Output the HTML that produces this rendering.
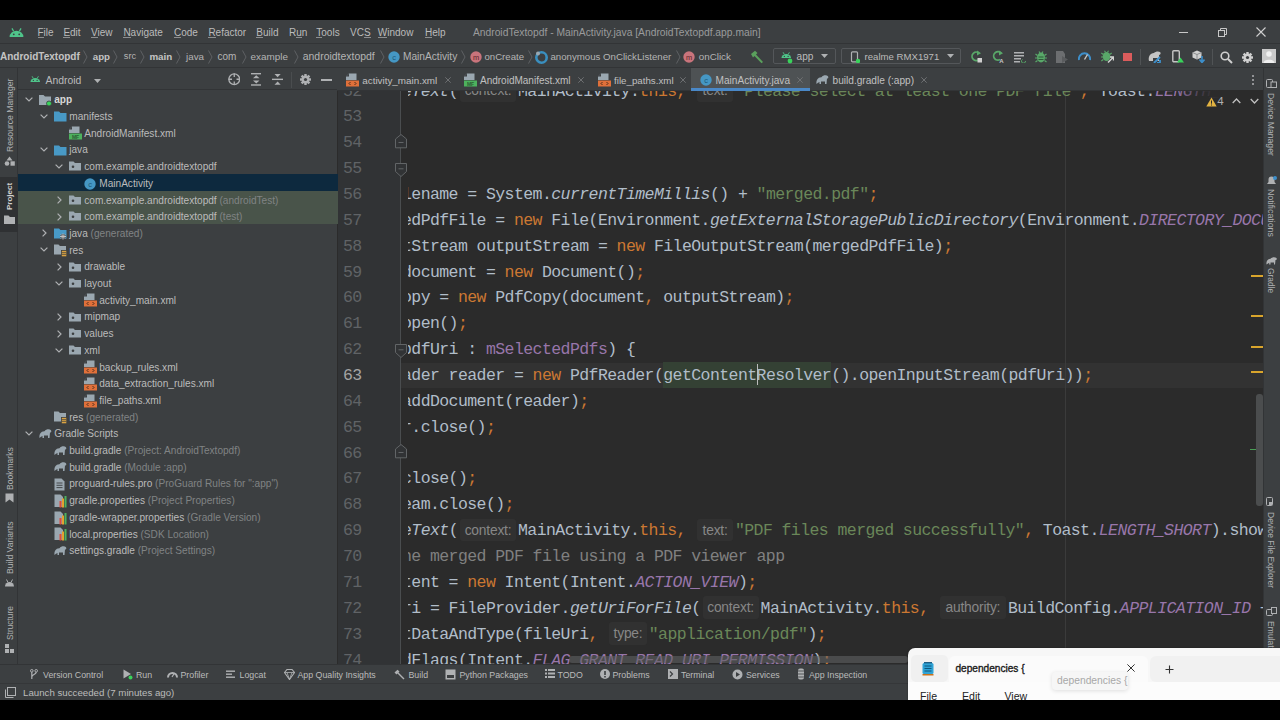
<!DOCTYPE html>
<html><head><meta charset="utf-8">
<style>
*{margin:0;padding:0;box-sizing:border-box}
html,body{width:1280px;height:720px;overflow:hidden;background:#000}
body{position:relative;font-family:"Liberation Sans",sans-serif;color:#bbbbbb}
.a{position:absolute}
.t{position:absolute;white-space:nowrap;line-height:1}
#menubar{left:0;top:20px;width:1280px;height:24px;background:#3c3f41;border-bottom:1px solid #323436}
#navbar{left:0;top:44px;width:1280px;height:24px;background:#3c3f41;border-bottom:1px solid #323436}
#lstrip{left:0;top:68px;width:18px;height:596px;background:#3c3f41;border-right:1px solid #323436}
#rstrip{left:1263px;top:68px;width:17px;height:596px;background:#3c3f41;border-left:1px solid #323436}
#proj{left:18px;top:68px;width:319px;height:596px;background:#3c3f41}
#projhead{left:18px;top:68px;width:319px;height:22px;border-bottom:1px solid #323436}
#editor{left:337px;top:68px;width:926px;height:596px;background:#2b2b2b;border-left:1px solid #2b2b2b}
#tabs{left:337px;top:68px;width:926px;height:22.6px;background:#3c3f41;border-bottom:1px solid #323436}
#gutter{left:338px;top:90px;width:63px;height:574px;background:#313335;overflow:hidden;border-right:1px solid #4a4d4f}
#codewrap{left:407.5px;top:90px;width:855.5px;height:574px;overflow:hidden}
#curline{left:401px;top:362.6px;width:862px;height:25.9px;background:#323232}
#btool{left:0;top:664px;width:1280px;height:19px;background:#3c3f41;border-top:1px solid #323436}
#status{left:0;top:683px;width:1280px;height:17px;background:#3c3f41;border-top:1px solid #353739}
.code{position:absolute;left:-5.54px;height:26px;font-family:"Liberation Mono",monospace;font-size:16.5px;letter-spacing:-0.5715px;line-height:25.865px;padding-top:0.4px;color:#b1bdc9;white-space:pre}
.ln{position:absolute;left:5px;font-family:"Liberation Mono",monospace;font-size:16.5px;letter-spacing:-0.5715px;line-height:25.865px;padding-top:0.4px;color:#606366;white-space:pre}
.ln.cur{color:#a4a3a3}
.k{color:#cc7832}.s{color:#6a8759}.i{font-style:italic}.p{color:#9876aa}.c{color:#808080}
.hl{background:#344134;display:inline-block;height:25.3px;margin-top:-0.8px;vertical-align:top;padding-top:0.8px}
.caret{display:inline-block;width:1px;height:20.7px;background:#bbbbbb;vertical-align:top;margin-top:1.3px;margin-right:-1px}
.ih{display:inline-block;vertical-align:top;margin:0.6px 2px 0 2px;height:22.5px;line-height:24.2px;background:#313131;color:#878787;border-radius:3px;font-family:"Liberation Sans",sans-serif;font-size:13.8px;text-align:center;letter-spacing:-0.2px}
</style></head><body>
<div id="menubar" class="a"></div>
<div id="navbar" class="a"></div>
<div id="lstrip" class="a"></div>
<div id="proj" class="a"></div>
<div id="projhead" class="a"></div>
<div id="editor" class="a"></div>
<div id="curline" class="a"></div>
<div class="a" style="left:1065px;top:90px;width:1px;height:574px;background:#3b3b3b"></div>
<div id="gutter" class="a">
<div class="ln" style="top:-11.89px">52</div>
<div class="ln" style="top:13.97px">53</div>
<div class="ln" style="top:39.84px">54</div>
<div class="ln" style="top:65.70px">55</div>
<div class="ln" style="top:91.56px">56</div>
<div class="ln" style="top:117.43px">57</div>
<div class="ln" style="top:143.29px">58</div>
<div class="ln" style="top:169.16px">59</div>
<div class="ln" style="top:195.02px">60</div>
<div class="ln" style="top:220.89px">61</div>
<div class="ln" style="top:246.75px">62</div>
<div class="ln cur" style="top:272.62px">63</div>
<div class="ln" style="top:298.49px">64</div>
<div class="ln" style="top:324.35px">65</div>
<div class="ln" style="top:350.22px">66</div>
<div class="ln" style="top:376.08px">67</div>
<div class="ln" style="top:401.94px">68</div>
<div class="ln" style="top:427.81px">69</div>
<div class="ln" style="top:453.67px">70</div>
<div class="ln" style="top:479.54px">71</div>
<div class="ln" style="top:505.40px">72</div>
<div class="ln" style="top:531.27px">73</div>
<div class="ln" style="top:557.13px">74</div>
</div>
<div id="codewrap" class="a">
<div class="code" style="top:-11.89px">e<span class="i">Text</span>(<span class="ih" style="width:56px">context:</span>MainActivity.<span class="k">this</span><span class="k">,</span> <span class="ih" style="width:35.6px">text:</span><span class="s">"Please select at least one PDF file"</span><span class="k">,</span> Toast.<span class="p i">LENGTH_SHORT</span>).show()<span class="k">;</span></div>
<div class="code" style="top:91.56px">lename = System.<span class="i">currentTimeMillis</span>() + <span class="s">"merged.pdf"</span><span class="k">;</span></div>
<div class="code" style="top:117.43px">edPdfFile = <span class="k">new</span> File(Environment.<span class="i">getExternalStoragePublicDirectory</span>(Environment.<span class="p i">DIRECTORY_DOCUMENTS</span>)<span class="k">,</span></div>
<div class="code" style="top:143.29px">tStream outputStream = <span class="k">new</span> FileOutputStream(mergedPdfFile)<span class="k">;</span></div>
<div class="code" style="top:169.16px">document = <span class="k">new</span> Document()<span class="k">;</span></div>
<div class="code" style="top:195.02px">opy = <span class="k">new</span> PdfCopy(document<span class="k">,</span> outputStream)<span class="k">;</span></div>
<div class="code" style="top:220.89px">open()<span class="k">;</span></div>
<div class="code" style="top:246.75px">pdfUri : <span class="p">mSelectedPdfs</span>) {</div>
<div class="code" style="top:272.62px">ader reader = <span class="k">new</span> PdfReader(<span class="hl">getContent<span class="caret"></span>Resolver</span>().openInputStream(pdfUri))<span class="k">;</span></div>
<div class="code" style="top:298.49px">addDocument(reader)<span class="k">;</span></div>
<div class="code" style="top:324.35px">r.close()<span class="k">;</span></div>
<div class="code" style="top:376.08px">close()<span class="k">;</span></div>
<div class="code" style="top:401.94px">eam.close()<span class="k">;</span></div>
<div class="code" style="top:427.81px">e<span class="i">Text</span>(<span class="ih" style="width:56px">context:</span>MainActivity.<span class="k">this</span><span class="k">,</span> <span class="ih" style="width:35.6px">text:</span><span class="s">"PDF files merged successfully"</span><span class="k">,</span> Toast.<span class="p i">LENGTH_SHORT</span>).show()<span class="k">;</span></div>
<div class="code" style="top:453.67px"><span class="c">he merged PDF file using a PDF viewer app</span></div>
<div class="code" style="top:479.54px">tent = <span class="k">new</span> Intent(Intent.<span class="p i">ACTION_VIEW</span>)<span class="k">;</span></div>
<div class="code" style="top:505.40px">ri = FileProvider.<span class="i">getUriForFile</span>(<span class="ih" style="width:56px">context:</span>MainActivity.<span class="k">this</span><span class="k">,</span> <span class="ih" style="width:66px">authority:</span>BuildConfig.<span class="p i">APPLICATION_ID</span> + <span class="s">".provider"</span>)<span class="k">;</span></div>
<div class="code" style="top:531.27px">tDataAndType(fileUri<span class="k">,</span> <span class="ih" style="width:37.5px">type:</span><span class="s">"application/pdf"</span>)<span class="k">;</span></div>
<div class="code" style="top:557.13px">dFlags(Intent.<span class="p i">FLAG_GRANT_READ_URI_PERMISSION</span>)<span class="k">;</span></div>
</div>
<div id="tabs" class="a"></div>
<div id="rstrip" class="a"></div>
<div id="btool" class="a"></div>
<div id="status" class="a"></div>
<svg class="a" style="left:9.4px;top:27.8px" width="15.0" height="9.0" viewBox="0 0 15 9"><path d="M0.6 9 A6.9 6.3 0 0 1 14.4 9 Z" fill="#4fc48a"/><line x1="3" y1="0.4" x2="4.6" y2="3.2" stroke="#4fc48a" stroke-width="1.3"/><line x1="12" y1="0.4" x2="10.4" y2="3.2" stroke="#4fc48a" stroke-width="1.3"/><circle cx="4.8" cy="6.3" r="0.9" fill="#3c3f41"/><circle cx="10.2" cy="6.3" r="0.9" fill="#3c3f41"/></svg>
<div class="t" style="left:37.5px;top:27.8px;font-size:10.0px;color:#bbbbbb;">File</div>
<div class="t" style="left:63.4px;top:27.8px;font-size:10.0px;color:#bbbbbb;">Edit</div>
<div class="t" style="left:91px;top:27.8px;font-size:10.0px;color:#bbbbbb;">View</div>
<div class="t" style="left:123.4px;top:27.8px;font-size:10.0px;color:#bbbbbb;">Navigate</div>
<div class="t" style="left:174px;top:27.8px;font-size:10.0px;color:#bbbbbb;">Code</div>
<div class="t" style="left:208.4px;top:27.8px;font-size:10.0px;color:#bbbbbb;">Refactor</div>
<div class="t" style="left:256.3px;top:27.8px;font-size:10.0px;color:#bbbbbb;">Build</div>
<div class="t" style="left:289px;top:27.8px;font-size:10.0px;color:#bbbbbb;">Run</div>
<div class="t" style="left:316.3px;top:27.8px;font-size:10.0px;color:#bbbbbb;">Tools</div>
<div class="t" style="left:350px;top:27.8px;font-size:10.0px;color:#bbbbbb;">VCS</div>
<div class="t" style="left:377.8px;top:27.8px;font-size:10.0px;color:#bbbbbb;">Window</div>
<div class="t" style="left:425px;top:27.8px;font-size:10.0px;color:#bbbbbb;">Help</div>
<div class="a" style="left:37.5px;top:37.3px;width:6.1px;height:1px;background:#8c8e90;"></div>
<div class="a" style="left:63.4px;top:37.3px;width:6.7px;height:1px;background:#8c8e90;"></div>
<div class="a" style="left:91.0px;top:37.3px;width:6.7px;height:1px;background:#8c8e90;"></div>
<div class="a" style="left:123.4px;top:37.3px;width:7.2px;height:1px;background:#8c8e90;"></div>
<div class="a" style="left:174.0px;top:37.3px;width:7.2px;height:1px;background:#8c8e90;"></div>
<div class="a" style="left:208.4px;top:37.3px;width:7.2px;height:1px;background:#8c8e90;"></div>
<div class="a" style="left:256.3px;top:37.3px;width:6.7px;height:1px;background:#8c8e90;"></div>
<div class="a" style="left:296.2px;top:37.3px;width:5.6px;height:1px;background:#8c8e90;"></div>
<div class="a" style="left:316.3px;top:37.3px;width:6.1px;height:1px;background:#8c8e90;"></div>
<div class="a" style="left:363.9px;top:37.3px;width:6.7px;height:1px;background:#8c8e90;"></div>
<div class="a" style="left:377.8px;top:37.3px;width:9.4px;height:1px;background:#8c8e90;"></div>
<div class="a" style="left:425.0px;top:37.3px;width:7.2px;height:1px;background:#8c8e90;"></div>
<div class="t" style="left:472.9px;top:27.8px;font-size:10.3px;color:#9a9b9c;">AndroidTextopdf - MainActivity.java [AndroidTextopdf.app.main]</div>
<div class="a" style="left:1179px;top:32px;width:9px;height:1px;background:#c8c8c8;"></div>
<svg class="a" style="left:1217px;top:27px" width="11" height="11" viewBox="0 0 11 11"><rect x="1.5" y="3.5" width="6" height="6" fill="none" stroke="#c8c8c8"/><path d="M3.5 3.5V1.5H9.5V7.5H7.5" fill="none" stroke="#c8c8c8"/></svg>
<svg class="a" style="left:1256px;top:27px" width="10" height="10" viewBox="0 0 10 10"><path d="M0.5 0.5L9.5 9.5M9.5 0.5L0.5 9.5" stroke="#d0d0d0" stroke-width="1.1"/></svg>
<div class="t" style="left:0px;top:51.8px;font-size:10.0px;color:#c4c4c4;font-weight:bold;">AndroidTextopdf</div>
<div class="t" style="left:92.8px;top:51.8px;font-size:9.7px;color:#c4c4c4;font-weight:bold;">app</div>
<div class="t" style="left:123.8px;top:51.8px;font-size:9.2px;color:#b4b4b4;">src</div>
<div class="t" style="left:149.4px;top:51.8px;font-size:9.8px;color:#c4c4c4;font-weight:bold;">main</div>
<div class="t" style="left:186px;top:51.8px;font-size:9.8px;color:#b4b4b4;">java</div>
<div class="t" style="left:217.5px;top:51.8px;font-size:10.0px;color:#b4b4b4;">com</div>
<div class="t" style="left:250.6px;top:51.8px;font-size:9.9px;color:#b4b4b4;">example</div>
<div class="t" style="left:302.75px;top:51.8px;font-size:10.45px;color:#b4b4b4;">androidtextopdf</div>
<div class="t" style="left:402.9px;top:51.8px;font-size:10.2px;color:#b4b4b4;">MainActivity</div>
<div class="t" style="left:484.5px;top:51.8px;font-size:9.6px;color:#b4b4b4;">onCreate</div>
<div class="t" style="left:550.5px;top:51.8px;font-size:9.66px;color:#b4b4b4;">anonymous OnClickListener</div>
<div class="t" style="left:698.75px;top:51.8px;font-size:9.8px;color:#b4b4b4;">onClick</div>
<svg class="a" style="left:82.5px;top:50px" width="5" height="14" viewBox="0 0 5 14"><path d="M0.5 0.5L4 7L0.5 13.5" fill="none" stroke="#5e6163" stroke-width="1"/></svg>
<svg class="a" style="left:113.4px;top:50px" width="5" height="14" viewBox="0 0 5 14"><path d="M0.5 0.5L4 7L0.5 13.5" fill="none" stroke="#5e6163" stroke-width="1"/></svg>
<svg class="a" style="left:139.7px;top:50px" width="5" height="14" viewBox="0 0 5 14"><path d="M0.5 0.5L4 7L0.5 13.5" fill="none" stroke="#5e6163" stroke-width="1"/></svg>
<svg class="a" style="left:176px;top:50px" width="5" height="14" viewBox="0 0 5 14"><path d="M0.5 0.5L4 7L0.5 13.5" fill="none" stroke="#5e6163" stroke-width="1"/></svg>
<svg class="a" style="left:208px;top:50px" width="5" height="14" viewBox="0 0 5 14"><path d="M0.5 0.5L4 7L0.5 13.5" fill="none" stroke="#5e6163" stroke-width="1"/></svg>
<svg class="a" style="left:242px;top:50px" width="5" height="14" viewBox="0 0 5 14"><path d="M0.5 0.5L4 7L0.5 13.5" fill="none" stroke="#5e6163" stroke-width="1"/></svg>
<svg class="a" style="left:293.8px;top:50px" width="5" height="14" viewBox="0 0 5 14"><path d="M0.5 0.5L4 7L0.5 13.5" fill="none" stroke="#5e6163" stroke-width="1"/></svg>
<svg class="a" style="left:380px;top:50px" width="5" height="14" viewBox="0 0 5 14"><path d="M0.5 0.5L4 7L0.5 13.5" fill="none" stroke="#5e6163" stroke-width="1"/></svg>
<svg class="a" style="left:461px;top:50px" width="5" height="14" viewBox="0 0 5 14"><path d="M0.5 0.5L4 7L0.5 13.5" fill="none" stroke="#5e6163" stroke-width="1"/></svg>
<svg class="a" style="left:528px;top:50px" width="5" height="14" viewBox="0 0 5 14"><path d="M0.5 0.5L4 7L0.5 13.5" fill="none" stroke="#5e6163" stroke-width="1"/></svg>
<svg class="a" style="left:675.5px;top:50px" width="5" height="14" viewBox="0 0 5 14"><path d="M0.5 0.5L4 7L0.5 13.5" fill="none" stroke="#5e6163" stroke-width="1"/></svg>
<svg class="a" style="left:387.5px;top:51px" width="12" height="12" viewBox="0 0 12 12"><circle cx="6.0" cy="6.0" r="5.7" fill="#4597c4"/><text x="6.0" y="8.6" text-anchor="middle" font-family="Liberation Sans" font-size="7.4399999999999995" fill="#1d5878">c</text></svg>
<svg class="a" style="left:469.5px;top:51px" width="12" height="12" viewBox="0 0 12 12"><circle cx="6.0" cy="6.0" r="5.7" fill="#c9747c"/><text x="6.0" y="8.6" text-anchor="middle" font-family="Liberation Sans" font-size="7.4399999999999995" fill="#5c2226">m</text></svg>
<svg class="a" style="left:535px;top:50.5px" width="13" height="13" viewBox="0 0 13 13"><circle cx="6.5" cy="6.5" r="5.2" fill="none" stroke="#3a8fbf" stroke-width="2.6"/><circle cx="3" cy="2.5" r="2" fill="#9aa7b0"/></svg>
<svg class="a" style="left:683.25px;top:51px" width="12" height="12" viewBox="0 0 12 12"><circle cx="6.0" cy="6.0" r="5.7" fill="#c9747c"/><text x="6.0" y="8.6" text-anchor="middle" font-family="Liberation Sans" font-size="7.4399999999999995" fill="#5c2226">m</text></svg>
<svg class="a" style="left:750px;top:50px" width="14" height="14" viewBox="0 0 14 14"><path d="M1 4L5 0.8L7.5 3L6 4.5L13 12L11.5 13.3L4.5 6L3 7.5Z" fill="#5aa05c"/></svg>
<div class="a" style="left:772.6px;top:47.7px;width:63px;height:16.3px;background:#3c3f41;border:1px solid #54575a;border-radius:2px;"></div>
<svg class="a" style="left:781.3px;top:52px" width="10.5" height="6.3" viewBox="0 0 15 9"><path d="M0.6 9 A6.9 6.3 0 0 1 14.4 9 Z" fill="#4fc48a"/><line x1="3" y1="0.4" x2="4.6" y2="3.2" stroke="#4fc48a" stroke-width="1.3"/><line x1="12" y1="0.4" x2="10.4" y2="3.2" stroke="#4fc48a" stroke-width="1.3"/><circle cx="4.8" cy="6.3" r="0.9" fill="#3c3f41"/><circle cx="10.2" cy="6.3" r="0.9" fill="#3c3f41"/></svg>
<svg class="a" style="left:787px;top:58px" width="6" height="6" viewBox="0 0 6 6"><circle cx="3" cy="3" r="2.4" fill="#39d35b"/></svg>
<div class="t" style="left:796.6px;top:51.8px;font-size:10.1px;color:#bbbbbb;">app</div>
<svg class="a" style="left:820.5px;top:54px" width="7" height="4" viewBox="0 0 7 4"><path d="M0 0H7L3.5 4Z" fill="#afb1b3"/></svg>
<div class="a" style="left:840.8px;top:47.7px;width:120px;height:16.3px;background:#3c3f41;border:1px solid #54575a;border-radius:2px;"></div>
<svg class="a" style="left:850px;top:50.5px" width="10" height="12" viewBox="0 0 10 12"><rect x="1.5" y="0.8" width="6" height="10" rx="1" fill="none" stroke="#afb1b3" stroke-width="1.2"/><circle cx="8" cy="10" r="2.2" fill="#39d35b"/></svg>
<div class="t" style="left:864.6px;top:51.8px;font-size:9.6px;color:#bbbbbb;">realme RMX1971</div>
<svg class="a" style="left:946.5px;top:54px" width="7" height="4" viewBox="0 0 7 4"><path d="M0 0H7L3.5 4Z" fill="#afb1b3"/></svg>
<svg class="a" style="left:970px;top:50px" width="12" height="13" viewBox="0 0 12 13"><path d="M9 9.5A4.2 4.2 0 1 1 9.2 3.3" fill="none" stroke="#59a869" stroke-width="1.8"/><path d="M7 0.5L11 3.3L7 5.5Z" fill="#59a869"/><rect x="7.5" y="8" width="4.5" height="4.5" fill="#d0d0d0"/></svg>
<svg class="a" style="left:991.5px;top:50px" width="12" height="13" viewBox="0 0 12 13"><path d="M8 9.5A4.2 4.2 0 1 1 9.2 3.3" fill="none" stroke="#59a869" stroke-width="1.8"/><path d="M7 0.5L11 3.3L7 5.5Z" fill="#59a869"/><text x="9.5" y="12.8" font-size="6" font-family="Liberation Sans" font-weight="bold" fill="#c8c8c8" text-anchor="middle">A</text></svg>
<svg class="a" style="left:1014px;top:50.5px" width="12" height="12" viewBox="0 0 12 12"><rect x="0" y="1" width="10" height="1.5" fill="#afb1b3"/><rect x="0" y="4" width="10" height="1.5" fill="#afb1b3"/><rect x="0" y="7" width="7" height="1.5" fill="#afb1b3"/><rect x="0" y="10" width="6" height="1.5" fill="#afb1b3"/><path d="M8.5 8.5a2 2 0 1 0 3 1.5" fill="none" stroke="#59a869" stroke-width="1"/></svg>
<svg class="a" style="left:1035px;top:50px" width="12" height="13" viewBox="0 0 12 13"><ellipse cx="6" cy="7.5" rx="4" ry="5" fill="#59a869"/><path d="M0.5 4L2.5 5.5M11.5 4L9.5 5.5M0 8H2M10 8H12M0.5 12L2.5 10.5M11.5 12L9.5 10.5M4 1.5L5 3M8 1.5L7 3" stroke="#59a869" stroke-width="1.2"/><rect x="3.5" y="6.5" width="5" height="1" fill="#2d5a38"/><rect x="3.5" y="9" width="5" height="1" fill="#2d5a38"/></svg>
<svg class="a" style="left:1056.4px;top:50.5px" width="13" height="12" viewBox="0 0 13 12"><path d="M0 0H7L9 3V12H0Z" fill="#6c6e70"/><path d="M6 5L12 8.5L6 12Z" fill="#5a5c5e"/></svg>
<svg class="a" style="left:1077.7px;top:51px" width="13" height="10" viewBox="0 0 13 10"><path d="M1 9A5.6 5.6 0 1 1 12 9" fill="none" stroke="#3d8fcb" stroke-width="2"/><path d="M6.5 8.5L9.5 3.5" stroke="#c8c8c8" stroke-width="1.4"/></svg>
<svg class="a" style="left:1100.6px;top:50px" width="13" height="13" viewBox="0 0 13 13"><ellipse cx="5.5" cy="6.5" rx="3.8" ry="4.6" fill="#59a869"/><path d="M0.3 3L2.3 4.5M10.7 3L8.7 4.5M0 7H2M9 7H11M0.3 11L2.3 9.5M3.5 0.8L4.5 2.3M7.5 0.8L6.5 2.3" stroke="#59a869" stroke-width="1.1"/><path d="M7 12.5L12.5 7M9 7H12.5V10.5" fill="none" stroke="#d0d0d0" stroke-width="1.5"/></svg>
<div class="a" style="left:1123px;top:52.5px;width:8.7px;height:8.1px;background:#db5c5c;"></div>
<div class="a" style="left:1140px;top:49px;width:1px;height:16px;background:#505355;"></div>
<svg class="a" style="left:1148.3px;top:50px" width="14" height="13" viewBox="0 0 14 13"><path d="M1 11C0 7 2 3 6 3C8 1 11 1 12.5 2.5C13 4 12 5 11 5L11 11H9.5V8H5V11H3.5Z" fill="#c5c5c5"/><path d="M6 13L12 7M9 13H12V10" fill="none" stroke="#3d8fcb" stroke-width="1.8"/></svg>
<svg class="a" style="left:1171.7px;top:50px" width="12" height="13" viewBox="0 0 12 13"><rect x="0.8" y="0.8" width="6.5" height="11" rx="1" fill="none" stroke="#c5c5c5" stroke-width="1.4"/><path d="M5 12.5L8.5 7.5L12 12.5Z" fill="#39d35b"/></svg>
<svg class="a" style="left:1192px;top:50px" width="13" height="13" viewBox="0 0 13 13"><path d="M5 0.5L9.5 2.5V7.5L5 9.5L0.5 7.5V2.5Z" fill="#d0d0d0"/><path d="M0.5 2.5L5 4.5L9.5 2.5M5 4.5V9.5" stroke="#7a7c7e" stroke-width="0.8" fill="none"/><path d="M10 6V12M7.5 9.5L10 12.5L12.5 9.5" fill="none" stroke="#3d8fcb" stroke-width="1.6"/></svg>
<div class="a" style="left:1211.8px;top:49px;width:1px;height:16px;background:#505355;"></div>
<svg class="a" style="left:1219.9px;top:50.5px" width="13" height="13" viewBox="0 0 13 13"><circle cx="5" cy="5" r="3.8" fill="none" stroke="#d0d0d0" stroke-width="1.6"/><path d="M8 8L12 12" stroke="#d0d0d0" stroke-width="1.9"/></svg>
<svg class="a" style="left:1241.7px;top:51.5px" width="11" height="11" viewBox="0 0 11 11"><g transform="translate(5.5 5.5)"><circle r="3.9" fill="#d0d0d0"/><rect x="-1.2" y="-5.5" width="2.4" height="2.5" fill="#d0d0d0" transform="rotate(0)"/><rect x="-1.2" y="-5.5" width="2.4" height="2.5" fill="#d0d0d0" transform="rotate(45)"/><rect x="-1.2" y="-5.5" width="2.4" height="2.5" fill="#d0d0d0" transform="rotate(90)"/><rect x="-1.2" y="-5.5" width="2.4" height="2.5" fill="#d0d0d0" transform="rotate(135)"/><rect x="-1.2" y="-5.5" width="2.4" height="2.5" fill="#d0d0d0" transform="rotate(180)"/><rect x="-1.2" y="-5.5" width="2.4" height="2.5" fill="#d0d0d0" transform="rotate(225)"/><rect x="-1.2" y="-5.5" width="2.4" height="2.5" fill="#d0d0d0" transform="rotate(270)"/><rect x="-1.2" y="-5.5" width="2.4" height="2.5" fill="#d0d0d0" transform="rotate(315)"/><circle r="1.6" fill="#3c3f41"/></g></svg>
<div class="a" style="left:1262px;top:49px;width:14px;height:14.2px;background:#c9c9c9;"></div>
<svg class="a" style="left:1262px;top:49px" width="14" height="14" viewBox="0 0 14 14"><circle cx="7" cy="5" r="2.8" fill="#f0f0f0"/><path d="M1.5 14C1.5 9.5 12.5 9.5 12.5 14Z" fill="#f0f0f0"/></svg>
<svg class="a" style="left:29.8px;top:76px" width="10.5" height="6.3" viewBox="0 0 15 9"><path d="M0.6 9 A6.9 6.3 0 0 1 14.4 9 Z" fill="#4fc48a"/><line x1="3" y1="0.4" x2="4.6" y2="3.2" stroke="#4fc48a" stroke-width="1.3"/><line x1="12" y1="0.4" x2="10.4" y2="3.2" stroke="#4fc48a" stroke-width="1.3"/><circle cx="4.8" cy="6.3" r="0.9" fill="#3c3f41"/><circle cx="10.2" cy="6.3" r="0.9" fill="#3c3f41"/></svg>
<div class="t" style="left:45.5px;top:76.2px;font-size:10.4px;color:#bbbbbb;">Android</div>
<svg class="a" style="left:94px;top:79px" width="7" height="4" viewBox="0 0 7 4"><path d="M0 0H7L3.5 4Z" fill="#afb1b3"/></svg>
<svg class="a" style="left:227.8px;top:73.3px" width="12.5" height="12.5" viewBox="0 0 12.5 12.5"><circle cx="6.25" cy="6.25" r="5.4" fill="none" stroke="#afb1b3" stroke-width="1.3"/><path d="M6.25 0.5V4M6.25 8.5V12M0.5 6.25H4M8.5 6.25H12" stroke="#afb1b3" stroke-width="1.3"/></svg>
<svg class="a" style="left:250.9px;top:73.3px" width="10.5" height="12.7" viewBox="0 0 10.5 12.7"><rect x="0" y="0" width="10.5" height="1.4" fill="#afb1b3"/><rect x="0" y="11.3" width="10.5" height="1.4" fill="#afb1b3"/><path d="M2 5.3L5.25 2.3L8.5 5.3ZM2 7.4L5.25 10.4L8.5 7.4Z" fill="#afb1b3"/></svg>
<svg class="a" style="left:271.7px;top:73.3px" width="11.2" height="12.7" viewBox="0 0 11.2 12.7"><rect x="0" y="5.65" width="11.2" height="1.4" fill="#afb1b3"/><path d="M2.5 1H8.7L5.6 4.3ZM2.5 11.7H8.7L5.6 8.4Z" fill="#afb1b3"/></svg>
<div class="a" style="left:291.4px;top:72px;width:1px;height:16px;background:#4a4d4f;"></div>
<svg class="a" style="left:300px;top:73.8px" width="11" height="11" viewBox="0 0 11 11"><g transform="translate(5.5 5.5)"><circle r="3.9" fill="#afb1b3"/><rect x="-1.2" y="-5.5" width="2.4" height="2.5" fill="#afb1b3" transform="rotate(0)"/><rect x="-1.2" y="-5.5" width="2.4" height="2.5" fill="#afb1b3" transform="rotate(45)"/><rect x="-1.2" y="-5.5" width="2.4" height="2.5" fill="#afb1b3" transform="rotate(90)"/><rect x="-1.2" y="-5.5" width="2.4" height="2.5" fill="#afb1b3" transform="rotate(135)"/><rect x="-1.2" y="-5.5" width="2.4" height="2.5" fill="#afb1b3" transform="rotate(180)"/><rect x="-1.2" y="-5.5" width="2.4" height="2.5" fill="#afb1b3" transform="rotate(225)"/><rect x="-1.2" y="-5.5" width="2.4" height="2.5" fill="#afb1b3" transform="rotate(270)"/><rect x="-1.2" y="-5.5" width="2.4" height="2.5" fill="#afb1b3" transform="rotate(315)"/><circle r="1.6" fill="#3c3f41"/></g></svg>
<div class="a" style="left:321.4px;top:79px;width:10.6px;height:1.6px;background:#afb1b3;"></div>
<div class="a" style="left:18px;top:174px;width:320px;height:16.7px;background:#0d293e;"></div>
<div class="a" style="left:18px;top:190.7px;width:320px;height:33.3px;background:#49544a;"></div>
<svg class="a" style="left:24.5px;top:97.0px" width="8" height="5" viewBox="0 0 8 5"><path d="M0.6 0.6L4 4L7.4 0.6" fill="none" stroke="#afb1b3" stroke-width="1.2"/></svg>
<svg class="a" style="left:39.25px;top:94.0px" width="13" height="12" viewBox="0 0 13 12"><path d="M0 1H4.5L6 2.5H12V11H0Z" fill="#9aa7b0"/><circle cx="10" cy="9.5" r="2.5" fill="#39d35b" stroke="#3c3f41" stroke-width="0.8"/></svg>
<div class="t" style="left:54.25px;top:95.3px;font-size:10.1px;color:#d8d8d8;font-weight:bold;">app</div>
<svg class="a" style="left:39.5px;top:113.7px" width="8" height="5" viewBox="0 0 8 5"><path d="M0.6 0.6L4 4L7.4 0.6" fill="none" stroke="#afb1b3" stroke-width="1.2"/></svg>
<svg class="a" style="left:54.25px;top:111.2px" width="12.5" height="11" viewBox="0 0 12.5 11"><path d="M0 0.5H5L6.5 2H12.5V10.5H0Z" fill="#4899c6"/></svg>
<div class="t" style="left:69.25px;top:112.0px;font-size:10.1px;color:#bbbbbb;">manifests</div>
<svg class="a" style="left:69.25px;top:126.4px" width="13" height="14" viewBox="0 0 13 14"><path d="M3 0.5H10.5V7H0V3.5Z" fill="#9aa7b0"/><path d="M0 3.5H3V0.5Z" fill="#3c3f41"/><rect x="0" y="7.5" width="13" height="6" fill="#4db25e"/><text x="6.5" y="12.6" font-size="5" text-anchor="middle" font-family="Liberation Sans" font-weight="bold" fill="#2b5e34">MF</text></svg>
<div class="t" style="left:84.25px;top:128.70000000000002px;font-size:10.1px;color:#bbbbbb;">AndroidManifest.xml</div>
<svg class="a" style="left:39.5px;top:147.1px" width="8" height="5" viewBox="0 0 8 5"><path d="M0.6 0.6L4 4L7.4 0.6" fill="none" stroke="#afb1b3" stroke-width="1.2"/></svg>
<svg class="a" style="left:54.25px;top:144.6px" width="12.5" height="11" viewBox="0 0 12.5 11"><path d="M0 0.5H5L6.5 2H12.5V10.5H0Z" fill="#4899c6"/></svg>
<div class="t" style="left:69.25px;top:145.4px;font-size:10.1px;color:#bbbbbb;">java</div>
<svg class="a" style="left:54.5px;top:163.8px" width="8" height="5" viewBox="0 0 8 5"><path d="M0.6 0.6L4 4L7.4 0.6" fill="none" stroke="#afb1b3" stroke-width="1.2"/></svg>
<svg class="a" style="left:69.25px;top:161.3px" width="12" height="10" viewBox="0 0 12 10"><path d="M0 0.5H4.5L6 2H12V9.5H0Z" fill="#9aa7b0"/><circle cx="4" cy="5.8" r="1.3" fill="#3c3f41"/></svg>
<div class="t" style="left:84.25px;top:162.10000000000002px;font-size:10.1px;color:#bbbbbb;">com.example.androidtextopdf</div>
<svg class="a" style="left:84.25px;top:177.5px" width="12" height="12" viewBox="0 0 12 12"><circle cx="6.0" cy="6.0" r="5.7" fill="#4597c4"/><text x="6.0" y="8.6" text-anchor="middle" font-family="Liberation Sans" font-size="7.4399999999999995" fill="#1d5878">c</text></svg>
<div class="t" style="left:99.25px;top:178.8px;font-size:10.1px;color:#bbbbbb;">MainActivity</div>
<svg class="a" style="left:56.5px;top:196.0px" width="5" height="8" viewBox="0 0 5 8"><path d="M0.6 0.6L4 4L0.6 7.4" fill="none" stroke="#afb1b3" stroke-width="1.2"/></svg>
<svg class="a" style="left:69.25px;top:194.7px" width="12" height="10" viewBox="0 0 12 10"><path d="M0 0.5H4.5L6 2H12V9.5H0Z" fill="#9aa7b0"/><circle cx="4" cy="5.8" r="1.3" fill="#3c3f41"/></svg>
<div class="t" style="left:84.25px;top:195.5px;font-size:10.1px;color:#bbbbbb;">com.example.androidtextopdf<span style="color:#808384"> (androidTest)</span></div>
<svg class="a" style="left:56.5px;top:212.7px" width="5" height="8" viewBox="0 0 5 8"><path d="M0.6 0.6L4 4L0.6 7.4" fill="none" stroke="#afb1b3" stroke-width="1.2"/></svg>
<svg class="a" style="left:69.25px;top:211.39999999999998px" width="12" height="10" viewBox="0 0 12 10"><path d="M0 0.5H4.5L6 2H12V9.5H0Z" fill="#9aa7b0"/><circle cx="4" cy="5.8" r="1.3" fill="#3c3f41"/></svg>
<div class="t" style="left:84.25px;top:212.2px;font-size:10.1px;color:#bbbbbb;">com.example.androidtextopdf<span style="color:#808384"> (test)</span></div>
<svg class="a" style="left:41.5px;top:229.4px" width="5" height="8" viewBox="0 0 5 8"><path d="M0.6 0.6L4 4L0.6 7.4" fill="none" stroke="#afb1b3" stroke-width="1.2"/></svg>
<svg class="a" style="left:54.25px;top:228.1px" width="13" height="12" viewBox="0 0 13 12"><path d="M0 0.5H5L6.5 2H12.5V10.5H0Z" fill="#4899c6"/><circle cx="9" cy="8.5" r="2.6" fill="#3c3f41"/><path d="M9 5.5V11.5M6 8.5H12M6.9 6.4L11.1 10.6M11.1 6.4L6.9 10.6" stroke="#c0c0c0" stroke-width="1"/></svg>
<div class="t" style="left:69.25px;top:228.9px;font-size:10.1px;color:#bbbbbb;">java<span style="color:#808384"> (generated)</span></div>
<svg class="a" style="left:39.5px;top:247.29999999999998px" width="8" height="5" viewBox="0 0 8 5"><path d="M0.6 0.6L4 4L7.4 0.6" fill="none" stroke="#afb1b3" stroke-width="1.2"/></svg>
<svg class="a" style="left:54.25px;top:244.29999999999998px" width="13" height="13" viewBox="0 0 13 13"><path d="M0 0.5H4.5L6 2H12V10.5H0Z" fill="#9aa7b0"/><rect x="7" y="6" width="5.5" height="6.5" fill="#3c3f41"/><rect x="7.8" y="6.8" width="4.5" height="5.5" fill="#d9a343"/><path d="M7.8 8.6H12.3M7.8 10.4H12.3" stroke="#3c3f41" stroke-width="0.7"/></svg>
<div class="t" style="left:69.25px;top:245.6px;font-size:10.1px;color:#bbbbbb;">res</div>
<svg class="a" style="left:56.5px;top:262.8px" width="5" height="8" viewBox="0 0 5 8"><path d="M0.6 0.6L4 4L0.6 7.4" fill="none" stroke="#afb1b3" stroke-width="1.2"/></svg>
<svg class="a" style="left:69.25px;top:261.5px" width="12" height="10" viewBox="0 0 12 10"><path d="M0 0.5H4.5L6 2H12V9.5H0Z" fill="#9aa7b0"/><circle cx="4" cy="5.8" r="1.3" fill="#3c3f41"/></svg>
<div class="t" style="left:84.25px;top:262.3px;font-size:10.1px;color:#bbbbbb;">drawable</div>
<svg class="a" style="left:54.5px;top:280.7px" width="8" height="5" viewBox="0 0 8 5"><path d="M0.6 0.6L4 4L7.4 0.6" fill="none" stroke="#afb1b3" stroke-width="1.2"/></svg>
<svg class="a" style="left:69.25px;top:278.2px" width="12" height="10" viewBox="0 0 12 10"><path d="M0 0.5H4.5L6 2H12V9.5H0Z" fill="#9aa7b0"/><circle cx="4" cy="5.8" r="1.3" fill="#3c3f41"/></svg>
<div class="t" style="left:84.25px;top:279.0px;font-size:10.1px;color:#bbbbbb;">layout</div>
<svg class="a" style="left:84.25px;top:293.4px" width="13" height="14" viewBox="0 0 13 14"><path d="M3 0.5H10.5V7H0V3.5Z" fill="#9aa7b0"/><path d="M0 3.5H3V0.5Z" fill="#3c3f41"/><rect x="0" y="7.5" width="13" height="6" fill="#e0703a"/><path d="M4.5 9L3 10.5L4.5 12M8.5 9L10 10.5L8.5 12" fill="none" stroke="#3c2518" stroke-width="0.9"/></svg>
<div class="t" style="left:99.25px;top:295.7px;font-size:10.1px;color:#bbbbbb;">activity_main.xml</div>
<svg class="a" style="left:56.5px;top:312.90000000000003px" width="5" height="8" viewBox="0 0 5 8"><path d="M0.6 0.6L4 4L0.6 7.4" fill="none" stroke="#afb1b3" stroke-width="1.2"/></svg>
<svg class="a" style="left:69.25px;top:311.6px" width="12" height="10" viewBox="0 0 12 10"><path d="M0 0.5H4.5L6 2H12V9.5H0Z" fill="#9aa7b0"/><circle cx="4" cy="5.8" r="1.3" fill="#3c3f41"/></svg>
<div class="t" style="left:84.25px;top:312.40000000000003px;font-size:10.1px;color:#bbbbbb;">mipmap</div>
<svg class="a" style="left:56.5px;top:329.59999999999997px" width="5" height="8" viewBox="0 0 5 8"><path d="M0.6 0.6L4 4L0.6 7.4" fill="none" stroke="#afb1b3" stroke-width="1.2"/></svg>
<svg class="a" style="left:69.25px;top:328.29999999999995px" width="12" height="10" viewBox="0 0 12 10"><path d="M0 0.5H4.5L6 2H12V9.5H0Z" fill="#9aa7b0"/><circle cx="4" cy="5.8" r="1.3" fill="#3c3f41"/></svg>
<div class="t" style="left:84.25px;top:329.09999999999997px;font-size:10.1px;color:#bbbbbb;">values</div>
<svg class="a" style="left:54.5px;top:347.5px" width="8" height="5" viewBox="0 0 8 5"><path d="M0.6 0.6L4 4L7.4 0.6" fill="none" stroke="#afb1b3" stroke-width="1.2"/></svg>
<svg class="a" style="left:69.25px;top:345.0px" width="12" height="10" viewBox="0 0 12 10"><path d="M0 0.5H4.5L6 2H12V9.5H0Z" fill="#9aa7b0"/><circle cx="4" cy="5.8" r="1.3" fill="#3c3f41"/></svg>
<div class="t" style="left:84.25px;top:345.8px;font-size:10.1px;color:#bbbbbb;">xml</div>
<svg class="a" style="left:84.25px;top:360.2px" width="13" height="14" viewBox="0 0 13 14"><path d="M3 0.5H10.5V7H0V3.5Z" fill="#9aa7b0"/><path d="M0 3.5H3V0.5Z" fill="#3c3f41"/><rect x="0" y="7.5" width="13" height="6" fill="#e0703a"/><path d="M4.5 9L3 10.5L4.5 12M8.5 9L10 10.5L8.5 12" fill="none" stroke="#3c2518" stroke-width="0.9"/></svg>
<div class="t" style="left:99.25px;top:362.5px;font-size:10.1px;color:#bbbbbb;">backup_rules.xml</div>
<svg class="a" style="left:84.25px;top:376.9px" width="13" height="14" viewBox="0 0 13 14"><path d="M3 0.5H10.5V7H0V3.5Z" fill="#9aa7b0"/><path d="M0 3.5H3V0.5Z" fill="#3c3f41"/><rect x="0" y="7.5" width="13" height="6" fill="#e0703a"/><path d="M4.5 9L3 10.5L4.5 12M8.5 9L10 10.5L8.5 12" fill="none" stroke="#3c2518" stroke-width="0.9"/></svg>
<div class="t" style="left:99.25px;top:379.2px;font-size:10.1px;color:#bbbbbb;">data_extraction_rules.xml</div>
<svg class="a" style="left:84.25px;top:393.59999999999997px" width="13" height="14" viewBox="0 0 13 14"><path d="M3 0.5H10.5V7H0V3.5Z" fill="#9aa7b0"/><path d="M0 3.5H3V0.5Z" fill="#3c3f41"/><rect x="0" y="7.5" width="13" height="6" fill="#e0703a"/><path d="M4.5 9L3 10.5L4.5 12M8.5 9L10 10.5L8.5 12" fill="none" stroke="#3c2518" stroke-width="0.9"/></svg>
<div class="t" style="left:99.25px;top:395.9px;font-size:10.1px;color:#bbbbbb;">file_paths.xml</div>
<svg class="a" style="left:54.25px;top:411.3px" width="13" height="13" viewBox="0 0 13 13"><path d="M0 0.5H4.5L6 2H12V10.5H0Z" fill="#9aa7b0"/><rect x="7" y="6" width="5.5" height="6.5" fill="#3c3f41"/><rect x="7.8" y="6.8" width="4.5" height="5.5" fill="#d9a343"/><path d="M7.8 8.6H12.3M7.8 10.4H12.3" stroke="#3c3f41" stroke-width="0.7"/></svg>
<div class="t" style="left:69.25px;top:412.6px;font-size:10.1px;color:#bbbbbb;">res<span style="color:#808384"> (generated)</span></div>
<svg class="a" style="left:24.5px;top:431.0px" width="8" height="5" viewBox="0 0 8 5"><path d="M0.6 0.6L4 4L7.4 0.6" fill="none" stroke="#afb1b3" stroke-width="1.2"/></svg>
<svg class="a" style="left:39.25px;top:428.0px" width="13" height="11" viewBox="0 0 13 11"><path d="M0.5 10C0 6 2 3 5.5 3.2C7 1.2 10.5 0.8 12 2.2C12.8 3.5 12 4.6 11 4.6L10.5 10H9V7.5H5V10H3.5V8C2.5 8.5 1.5 9 0.5 10Z" fill="#9aa7b0"/></svg>
<div class="t" style="left:54.25px;top:429.3px;font-size:10.1px;color:#bbbbbb;">Gradle Scripts</div>
<svg class="a" style="left:54px;top:444.7px" width="13" height="11" viewBox="0 0 13 11"><path d="M0.5 10C0 6 2 3 5.5 3.2C7 1.2 10.5 0.8 12 2.2C12.8 3.5 12 4.6 11 4.6L10.5 10H9V7.5H5V10H3.5V8C2.5 8.5 1.5 9 0.5 10Z" fill="#9aa7b0"/></svg>
<div class="t" style="left:69.25px;top:446.0px;font-size:10.1px;color:#bbbbbb;">build.gradle<span style="color:#808384"> (Project: AndroidTextopdf)</span></div>
<svg class="a" style="left:54px;top:461.4px" width="13" height="11" viewBox="0 0 13 11"><path d="M0.5 10C0 6 2 3 5.5 3.2C7 1.2 10.5 0.8 12 2.2C12.8 3.5 12 4.6 11 4.6L10.5 10H9V7.5H5V10H3.5V8C2.5 8.5 1.5 9 0.5 10Z" fill="#9aa7b0"/></svg>
<div class="t" style="left:69.25px;top:462.7px;font-size:10.1px;color:#bbbbbb;">build.gradle<span style="color:#808384"> (Module :app)</span></div>
<svg class="a" style="left:54px;top:477.59999999999997px" width="11" height="13" viewBox="0 0 11 13"><path d="M0.5 0.5H7.5L10.5 3.5V12.5H0.5Z" fill="#9aa7b0"/><path d="M2.5 5H8.5M2.5 7.3H8.5M2.5 9.6H8.5" stroke="#3c3f41" stroke-width="0.9"/></svg>
<div class="t" style="left:69.25px;top:479.4px;font-size:10.1px;color:#bbbbbb;">proguard-rules.pro<span style="color:#808384"> (ProGuard Rules for ":app")</span></div>
<svg class="a" style="left:54px;top:493.79999999999995px" width="13" height="14" viewBox="0 0 13 14"><path d="M0.5 0.5H6.5L9 3V13H0.5Z" fill="#9aa7b0"/><rect x="5.5" y="7" width="2" height="6.5" fill="#d94d3e"/><rect x="8" y="4.5" width="2" height="9" fill="#e3a230"/><rect x="10.5" y="2" width="2" height="11.5" fill="#4db25e"/></svg>
<div class="t" style="left:69.25px;top:496.09999999999997px;font-size:10.1px;color:#bbbbbb;">gradle.properties<span style="color:#808384"> (Project Properties)</span></div>
<svg class="a" style="left:54px;top:510.5px" width="13" height="14" viewBox="0 0 13 14"><path d="M0.5 0.5H6.5L9 3V13H0.5Z" fill="#9aa7b0"/><rect x="5.5" y="7" width="2" height="6.5" fill="#d94d3e"/><rect x="8" y="4.5" width="2" height="9" fill="#e3a230"/><rect x="10.5" y="2" width="2" height="11.5" fill="#4db25e"/></svg>
<div class="t" style="left:69.25px;top:512.8px;font-size:10.1px;color:#bbbbbb;">gradle-wrapper.properties<span style="color:#808384"> (Gradle Version)</span></div>
<svg class="a" style="left:54px;top:527.2px" width="13" height="14" viewBox="0 0 13 14"><path d="M0.5 0.5H6.5L9 3V13H0.5Z" fill="#9aa7b0"/><rect x="5.5" y="7" width="2" height="6.5" fill="#d94d3e"/><rect x="8" y="4.5" width="2" height="9" fill="#e3a230"/><rect x="10.5" y="2" width="2" height="11.5" fill="#4db25e"/></svg>
<div class="t" style="left:69.25px;top:529.5px;font-size:10.1px;color:#bbbbbb;">local.properties<span style="color:#808384"> (SDK Location)</span></div>
<svg class="a" style="left:54px;top:544.9px" width="13" height="11" viewBox="0 0 13 11"><path d="M0.5 10C0 6 2 3 5.5 3.2C7 1.2 10.5 0.8 12 2.2C12.8 3.5 12 4.6 11 4.6L10.5 10H9V7.5H5V10H3.5V8C2.5 8.5 1.5 9 0.5 10Z" fill="#9aa7b0"/></svg>
<div class="t" style="left:69.25px;top:546.1999999999999px;font-size:10.1px;color:#bbbbbb;">settings.gradle<span style="color:#808384"> (Project Settings)</span></div>
<div class="a" style="left:691.25px;top:68px;width:118.75px;height:22px;background:#4e5254;"></div>
<div class="a" style="left:691.25px;top:87.8px;width:118.75px;height:3px;background:#4a88c7;"></div>
<svg class="a" style="left:345.75px;top:73px" width="13" height="14" viewBox="0 0 13 14"><path d="M3 0.5H10.5V7H0V3.5Z" fill="#9aa7b0"/><path d="M0 3.5H3V0.5Z" fill="#3c3f41"/><rect x="0" y="7.5" width="13" height="6" fill="#e0703a"/><path d="M4.5 9L3 10.5L4.5 12M8.5 9L10 10.5L8.5 12" fill="none" stroke="#3c2518" stroke-width="0.9"/></svg>
<div class="t" style="left:362.25px;top:75.6px;font-size:9.85px;color:#c0c0c0;">activity_main.xml</div>
<svg class="a" style="left:444.75px;top:77px" width="6" height="6" viewBox="0 0 6 6"><path d="M0.3 0.3L5.7 5.7M5.7 0.3L0.3 5.7" stroke="#6e7072" stroke-width="1"/></svg>
<svg class="a" style="left:464px;top:73px" width="13" height="14" viewBox="0 0 13 14"><path d="M3 0.5H10.5V7H0V3.5Z" fill="#9aa7b0"/><path d="M0 3.5H3V0.5Z" fill="#3c3f41"/><rect x="0" y="7.5" width="13" height="6" fill="#4db25e"/><text x="6.5" y="12.6" font-size="5" text-anchor="middle" font-family="Liberation Sans" font-weight="bold" fill="#2b5e34">MF</text></svg>
<div class="t" style="left:480px;top:75.6px;font-size:10.0px;color:#c0c0c0;">AndroidManifest.xml</div>
<svg class="a" style="left:577.8px;top:77px" width="6" height="6" viewBox="0 0 6 6"><path d="M0.3 0.3L5.7 5.7M5.7 0.3L0.3 5.7" stroke="#6e7072" stroke-width="1"/></svg>
<svg class="a" style="left:597.5px;top:73px" width="13" height="14" viewBox="0 0 13 14"><path d="M3 0.5H10.5V7H0V3.5Z" fill="#9aa7b0"/><path d="M0 3.5H3V0.5Z" fill="#3c3f41"/><rect x="0" y="7.5" width="13" height="6" fill="#e0703a"/><path d="M4.5 9L3 10.5L4.5 12M8.5 9L10 10.5L8.5 12" fill="none" stroke="#3c2518" stroke-width="0.9"/></svg>
<div class="t" style="left:614px;top:75.6px;font-size:9.75px;color:#c0c0c0;">file_paths.xml</div>
<svg class="a" style="left:680px;top:77px" width="6" height="6" viewBox="0 0 6 6"><path d="M0.3 0.3L5.7 5.7M5.7 0.3L0.3 5.7" stroke="#6e7072" stroke-width="1"/></svg>
<svg class="a" style="left:699.7px;top:74px" width="12" height="12" viewBox="0 0 12 12"><circle cx="6.0" cy="6.0" r="5.7" fill="#4597c4"/><text x="6.0" y="8.6" text-anchor="middle" font-family="Liberation Sans" font-size="7.4399999999999995" fill="#1d5878">c</text></svg>
<div class="t" style="left:715.6px;top:75.6px;font-size:10.1px;color:#c0c0c0;">MainActivity.java</div>
<svg class="a" style="left:796.9px;top:77px" width="6" height="6" viewBox="0 0 6 6"><path d="M0.3 0.3L5.7 5.7M5.7 0.3L0.3 5.7" stroke="#6e7072" stroke-width="1"/></svg>
<svg class="a" style="left:815.6px;top:74px" width="13" height="11" viewBox="0 0 13 11"><path d="M0.5 10C0 6 2 3 5.5 3.2C7 1.2 10.5 0.8 12 2.2C12.8 3.5 12 4.6 11 4.6L10.5 10H9V7.5H5V10H3.5V8C2.5 8.5 1.5 9 0.5 10Z" fill="#9aa7b0"/></svg>
<div class="t" style="left:832.5px;top:75.6px;font-size:10.15px;color:#c0c0c0;">build.gradle (:app)</div>
<svg class="a" style="left:921px;top:77px" width="6" height="6" viewBox="0 0 6 6"><path d="M0.3 0.3L5.7 5.7M5.7 0.3L0.3 5.7" stroke="#6e7072" stroke-width="1"/></svg>
<div class="a" style="left:1251.5px;top:75px;width:2px;height:2px;background:#afb1b3;border-radius:1px;"></div>
<div class="a" style="left:1251.5px;top:79px;width:2px;height:2px;background:#afb1b3;border-radius:1px;"></div>
<div class="a" style="left:1251.5px;top:83px;width:2px;height:2px;background:#afb1b3;border-radius:1px;"></div>
<div class="a" style="left:1175px;top:90px;width:88px;height:22px;background:linear-gradient(90deg,rgba(43,43,43,0) 0px,rgba(43,43,43,0.85) 30px,#2b2b2b 45px);"></div>
<svg class="a" style="left:1205.5px;top:97px" width="11" height="10" viewBox="0 0 11 10"><path d="M5.5 0.5L10.7 9.5H0.3Z" fill="#e3b341"/><rect x="5" y="3.5" width="1" height="3.2" fill="#2b2b2b"/><rect x="5" y="7.5" width="1" height="1" fill="#2b2b2b"/></svg>
<div class="t" style="left:1217.3px;top:96.3px;font-size:11.5px;color:#b0b0b0;">4</div>
<svg class="a" style="left:1232px;top:98px" width="9" height="6" viewBox="0 0 9 6"><path d="M0.7 5L4.5 1L8.3 5" fill="none" stroke="#c0c0c0" stroke-width="1.3"/></svg>
<svg class="a" style="left:1249.5px;top:98px" width="9" height="6" viewBox="0 0 9 6"><path d="M0.7 1L4.5 5L8.3 1" fill="none" stroke="#c0c0c0" stroke-width="1.3"/></svg>
<div class="a" style="left:1251px;top:274.8px;width:11.5px;height:2px;background:#d9a52c;"></div>
<div class="a" style="left:1251px;top:314.8px;width:11.5px;height:2px;background:#d9a52c;"></div>
<div class="a" style="left:1251px;top:345.7px;width:11.5px;height:2px;background:#d9a52c;"></div>
<div class="a" style="left:1251px;top:371px;width:11.5px;height:2px;background:#d9a52c;"></div>
<div class="a" style="left:1250px;top:448.5px;width:12px;height:1.2px;background:#4a9e56;"></div>
<div class="a" style="left:1255.5px;top:394px;width:7px;height:112px;background:#4b4d4e;border-radius:3px;"></div>
<div class="a" style="left:568.5px;top:656px;width:339px;height:7px;background:rgba(95,97,99,0.6);border-radius:3px;"></div>
<svg class="a" style="left:395px;top:134.2px" width="12" height="14.5" viewBox="0 0 12 14.5"><path d="M0.5 5L6 0.5L11.5 5V13.8H0.5Z" fill="#313335" stroke="#626567" stroke-width="1"/><path d="M3.5 8.5H8.5" stroke="#626567"/></svg>
<svg class="a" style="left:395px;top:162.9px" width="12" height="14.5" viewBox="0 0 12 14.5"><path d="M0.5 0.5H11.5V8.5L6 13.5L0.5 8.5Z" fill="#313335" stroke="#626567" stroke-width="1"/><path d="M3.5 5.8H8.5" stroke="#626567"/></svg>
<svg class="a" style="left:395px;top:343.5px" width="12" height="14.5" viewBox="0 0 12 14.5"><path d="M0.5 0.5H11.5V8.5L6 13.5L0.5 8.5Z" fill="#313335" stroke="#626567" stroke-width="1"/><path d="M3.5 5.8H8.5" stroke="#626567"/></svg>
<svg class="a" style="left:395px;top:444.2px" width="12" height="14.5" viewBox="0 0 12 14.5"><path d="M0.5 5L6 0.5L11.5 5V13.8H0.5Z" fill="#313335" stroke="#626567" stroke-width="1"/><path d="M3.5 8.5H8.5" stroke="#626567"/></svg>
<div class="a" style="left:0px;top:176.7px;width:17.5px;height:55.3px;background:#2f3133;"></div>
<div class="t" style="left:5.8px;top:151.7px;font-size:8.65px;color:#afb1b3;transform:rotate(-90deg);transform-origin:0 0">Resource Manager</div>
<svg class="a" style="left:4px;top:155.8px" width="11" height="10" viewBox="0 0 11 10"><path d="M5.5 0.5L8.5 4.5H2.5Z" fill="#afb1b3"/><circle cx="3" cy="7.5" r="2.3" fill="#afb1b3"/><rect x="6.5" y="5.3" width="4.3" height="4.4" fill="#afb1b3"/></svg>
<div class="t" style="left:5.8px;top:210px;font-size:8.0px;color:#d0d0d0;font-weight:bold;transform:rotate(-90deg);transform-origin:0 0">Project</div>
<svg class="a" style="left:4px;top:215.3px" width="11" height="9" viewBox="0 0 11 9"><path d="M0 0.5H4.5L6 2H11V9.5H0Z" fill="#afb1b3"/></svg>
<div class="t" style="left:5.8px;top:489.5px;font-size:8.55px;color:#afb1b3;transform:rotate(-90deg);transform-origin:0 0">Bookmarks</div>
<svg class="a" style="left:5px;top:492.5px" width="9" height="10" viewBox="0 0 9 10"><path d="M0.5 0.5H8.5V9.5L4.5 6.5L0.5 9.5Z" fill="#afb1b3"/></svg>
<div class="t" style="left:5.8px;top:573.8px;font-size:8.65px;color:#afb1b3;transform:rotate(-90deg);transform-origin:0 0">Build Variants</div>
<svg class="a" style="left:4px;top:578.6px" width="11" height="8" viewBox="0 0 11 8"><path d="M1 7.5A4.5 4.5 0 0 1 10 7.5Z" fill="#afb1b3"/><path d="M2.5 0.5L3.8 3M8.5 0.5L7.2 3" stroke="#afb1b3"/></svg>
<div class="t" style="left:5.8px;top:640.4px;font-size:8.4px;color:#afb1b3;transform:rotate(-90deg);transform-origin:0 0">Structure</div>
<svg class="a" style="left:5px;top:644.4px" width="9" height="9" viewBox="0 0 9 9"><rect x="0" y="0" width="4" height="4" fill="#afb1b3"/><rect x="5" y="5" width="4" height="4" fill="#afb1b3"/><rect x="0" y="5" width="4" height="4" fill="#afb1b3"/></svg>
<svg class="a" style="left:1266px;top:78.5px" width="11" height="9" viewBox="0 0 11 9"><rect x="0.5" y="0.5" width="6" height="8" rx="1" fill="none" stroke="#afb1b3"/><rect x="5" y="3" width="5.5" height="5.5" fill="#3c3f41" stroke="#afb1b3"/></svg>
<div class="t" style="left:1274.7px;top:93px;font-size:8.65px;color:#afb1b3;transform:rotate(90deg);transform-origin:0 0">Device Manager</div>
<svg class="a" style="left:1266px;top:176px" width="11" height="10" viewBox="0 0 11 10"><path d="M1 8H10L8.5 6V3.5A3 3 0 0 0 2.5 3.5V6Z" fill="#afb1b3"/><circle cx="9" cy="2" r="2" fill="#3d8fcb"/></svg>
<div class="t" style="left:1274.7px;top:189px;font-size:8.8px;color:#afb1b3;transform:rotate(90deg);transform-origin:0 0">Notifications</div>
<svg class="a" style="left:1266px;top:256px" width="12" height="9" viewBox="0 0 12 9"><path d="M0.5 8.5C0 5.5 1.5 2.5 4.5 2.7C6 1 9 0.7 10.5 2C11.2 3.2 10.5 4 9.5 4L9 8.5H8V6.5H4.5V8.5H3.2V6.8Z" fill="#afb1b3"/></svg>
<div class="t" style="left:1274.7px;top:268px;font-size:8.4px;color:#afb1b3;transform:rotate(90deg);transform-origin:0 0">Gradle</div>
<svg class="a" style="left:1266px;top:497px" width="11" height="9" viewBox="0 0 11 9"><rect x="0.5" y="0.5" width="6" height="8" rx="1" fill="none" stroke="#afb1b3"/><rect x="3" y="5" width="3" height="3" fill="#afb1b3"/></svg>
<div class="t" style="left:1274.7px;top:512px;font-size:8.5px;color:#afb1b3;transform:rotate(90deg);transform-origin:0 0">Device File Explorer</div>
<svg class="a" style="left:1266px;top:607px" width="11" height="9" viewBox="0 0 11 9"><rect x="0.5" y="2.5" width="6" height="6" rx="1" fill="none" stroke="#afb1b3"/><rect x="5.5" y="0.5" width="5" height="6" fill="#3c3f41" stroke="#afb1b3"/></svg>
<div class="t" style="left:1274.7px;top:621px;font-size:8.6px;color:#afb1b3;transform:rotate(90deg);transform-origin:0 0">Emulator</div>
<div class="t" style="left:43px;top:670.6px;font-size:8.8px;color:#bbbbbb;">Version Control</div>
<svg class="a" style="left:29.5px;top:669px" width="8" height="11" viewBox="0 0 8 11"><circle cx="1.8" cy="1.8" r="1.3" fill="none" stroke="#afb1b3"/><circle cx="6.2" cy="1.8" r="1.3" fill="none" stroke="#afb1b3"/><path d="M1.8 3V10M6.2 3C6.2 6 1.8 5 1.8 8" fill="none" stroke="#afb1b3" stroke-width="1.2"/></svg>
<div class="t" style="left:136px;top:670.6px;font-size:8.8px;color:#bbbbbb;">Run</div>
<svg class="a" style="left:122.5px;top:669px" width="10" height="11" viewBox="0 0 10 11"><path d="M0.5 0.5L8 5L0.5 9.5Z" fill="#afb1b3"/><circle cx="7.5" cy="8.5" r="2" fill="#39d35b"/></svg>
<div class="t" style="left:180.5px;top:670.6px;font-size:8.8px;color:#bbbbbb;">Profiler</div>
<svg class="a" style="left:167px;top:670px" width="11" height="8" viewBox="0 0 11 8"><path d="M1 7.5A4.5 4.5 0 0 1 10 7.5" fill="none" stroke="#afb1b3" stroke-width="2"/><path d="M5 7L7.5 3" stroke="#afb1b3" stroke-width="1.2"/></svg>
<div class="t" style="left:239.5px;top:670.6px;font-size:8.8px;color:#bbbbbb;">Logcat</div>
<svg class="a" style="left:225.5px;top:670px" width="10" height="9" viewBox="0 0 10 9"><rect x="0" y="0.5" width="9" height="1.4" fill="#afb1b3"/><rect x="0" y="3.5" width="6" height="1.4" fill="#afb1b3"/><rect x="0" y="6.5" width="9" height="1.4" fill="#afb1b3"/></svg>
<div class="t" style="left:297.5px;top:670.6px;font-size:8.8px;color:#bbbbbb;">App Quality Insights</div>
<svg class="a" style="left:284px;top:668.5px" width="11" height="11" viewBox="0 0 11 11"><path d="M0.5 3.5L3 0.5H8L10.5 3.5L5.5 10.5Z" fill="none" stroke="#afb1b3" stroke-width="1.1"/><path d="M0.5 3.5H10.5M3 3.5L5.5 10.5L8 3.5" fill="none" stroke="#afb1b3" stroke-width="0.8"/></svg>
<div class="t" style="left:408.5px;top:670.6px;font-size:8.8px;color:#bbbbbb;">Build</div>
<svg class="a" style="left:394px;top:668.5px" width="11" height="11" viewBox="0 0 11 11"><path d="M0.5 3.5L3.5 0.8L5.5 2.5L4.5 3.5L10.5 9.5L9.5 10.5L3.5 4.5L2.5 5.5Z" fill="#afb1b3"/></svg>
<div class="t" style="left:459.5px;top:670.6px;font-size:8.8px;color:#bbbbbb;">Python Packages</div>
<svg class="a" style="left:445px;top:668.5px" width="11" height="11" viewBox="0 0 11 11"><rect x="0.5" y="0.5" width="10" height="10" fill="#afb1b3"/><rect x="2" y="6" width="7" height="3" fill="#3c3f41"/></svg>
<div class="t" style="left:557.5px;top:670.6px;font-size:8.8px;color:#bbbbbb;">TODO</div>
<svg class="a" style="left:545px;top:669px" width="10" height="9" viewBox="0 0 10 9"><rect x="0" y="0" width="2" height="2" fill="#afb1b3"/><rect x="3" y="0" width="7" height="2" fill="#afb1b3"/><rect x="0" y="3.5" width="2" height="2" fill="#afb1b3"/><rect x="3" y="3.5" width="7" height="2" fill="#afb1b3"/><rect x="0" y="7" width="2" height="2" fill="#afb1b3"/><rect x="3" y="7" width="7" height="2" fill="#afb1b3"/></svg>
<div class="t" style="left:612.5px;top:670.6px;font-size:8.8px;color:#bbbbbb;">Problems</div>
<svg class="a" style="left:600px;top:668.5px" width="10" height="10" viewBox="0 0 10 10"><circle cx="5" cy="5" r="5" fill="#afb1b3"/><rect x="4.2" y="2" width="1.6" height="4" fill="#3c3f41"/><rect x="4.2" y="7" width="1.6" height="1.5" fill="#3c3f41"/></svg>
<div class="t" style="left:681px;top:670.6px;font-size:8.8px;color:#bbbbbb;">Terminal</div>
<svg class="a" style="left:668px;top:668.5px" width="10" height="10" viewBox="0 0 10 10"><rect x="0" y="0" width="10" height="10" fill="#afb1b3"/><path d="M2 2.5L4.5 5L2 7.5" fill="none" stroke="#3c3f41" stroke-width="1.2"/></svg>
<div class="t" style="left:746px;top:670.6px;font-size:8.8px;color:#bbbbbb;">Services</div>
<svg class="a" style="left:732px;top:668.5px" width="11" height="11" viewBox="0 0 11 11"><circle cx="5.5" cy="5.5" r="5" fill="#afb1b3"/><path d="M4 3L8 5.5L4 8Z" fill="#3c3f41"/></svg>
<div class="t" style="left:809px;top:670.6px;font-size:8.8px;color:#bbbbbb;">App Inspection</div>
<svg class="a" style="left:795.5px;top:668px" width="10" height="12" viewBox="0 0 10 12"><rect x="2" y="0.5" width="6" height="11" rx="2" fill="#afb1b3"/><path d="M0 3H10M0 6H10M0 9H10" stroke="#3c3f41" stroke-width="0.8"/></svg>
<svg class="a" style="left:5px;top:686.5px" width="11" height="11" viewBox="0 0 11 11"><rect x="2.5" y="0.5" width="8" height="8" fill="none" stroke="#afb1b3"/><path d="M0.5 2.5V10.5H8.5" fill="none" stroke="#afb1b3"/></svg>
<div class="t" style="left:23px;top:688px;font-size:9.7px;color:#bbbbbb;">Launch succeeded (7 minutes ago)</div>
<div class="a" style="left:908.3px;top:648.3px;width:380px;height:52px;background:#f7f7f7;border-radius:7px 0 0 0;box-shadow:0 0 2px rgba(0,0,0,0.35);"></div>
<div class="a" style="left:911px;top:655px;width:37px;height:27px;background:#f0f0f0;border-radius:5px;"></div>
<div class="a" style="left:1150px;top:655.5px;width:130px;height:26px;background:#f1f1f1;border-radius:6px 0 0 6px;"></div>
<div class="a" style="left:949px;top:655.8px;width:199px;height:27px;background:#fbfbfb;border-radius:6px 6px 0 0;"></div>
<div class="a" style="left:908.3px;top:681.6px;width:372px;height:20px;background:#fcfcfc;"></div>
<svg class="a" style="left:922px;top:661.5px" width="12" height="14" viewBox="0 0 12 14"><rect x="0.5" y="1" width="11" height="11" rx="1.5" fill="#2fa3d6"/><path d="M2.5 4H9.5M2.5 6.5H9.5M2.5 9H9.5" stroke="#0b4f73" stroke-width="0.9"/><rect x="0.5" y="12" width="11" height="1.5" fill="#c9721b"/><rect x="2" y="0" width="8" height="1.4" fill="#1f5f85"/></svg>
<div class="t" style="left:955.5px;top:664px;font-size:10.1px;color:#1b1b1b;-webkit-text-stroke:0.35px #1b1b1b;">dependencies {</div>
<svg class="a" style="left:1127px;top:664px" width="8" height="8" viewBox="0 0 8 8"><path d="M0.4 0.4L7.6 7.6M7.6 0.4L0.4 7.6" stroke="#333" stroke-width="1"/></svg>
<svg class="a" style="left:1165px;top:665px" width="9" height="9" viewBox="0 0 9 9"><path d="M4.5 0.5V8.5M0.5 4.5H8.5" stroke="#333" stroke-width="1.1"/></svg>
<div class="a" style="left:1052px;top:672px;width:76px;height:18px;background:#f6f6f6;border-radius:4px;box-shadow:0 1px 4px rgba(0,0,0,0.12);"></div>
<div class="t" style="left:1057px;top:676px;font-size:10.3px;color:#a8a8a8;">dependencies {</div>
<div class="t" style="left:920px;top:690.5px;font-size:10.6px;color:#222;">File</div>
<div class="t" style="left:962px;top:690.5px;font-size:10.6px;color:#222;">Edit</div>
<div class="t" style="left:1004.5px;top:690.5px;font-size:10.6px;color:#222;">View</div>
<div class="a" style="left:0px;top:699.5px;width:1280px;height:20.5px;background:#000;"></div>
</body></html>
